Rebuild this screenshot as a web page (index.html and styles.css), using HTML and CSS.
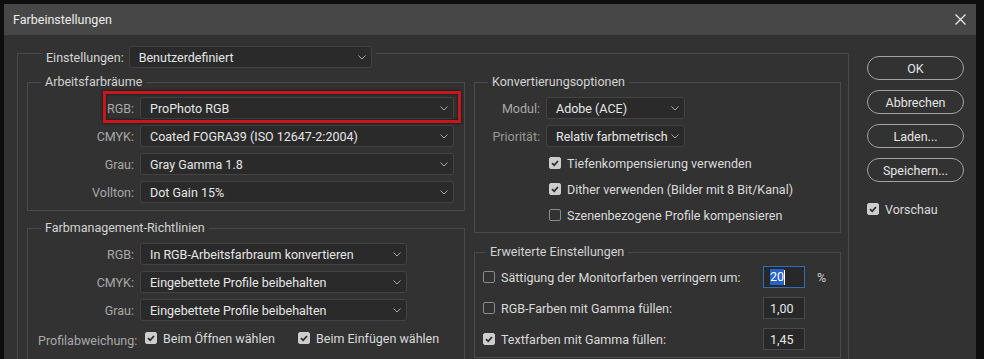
FILE: index.html
```html
<!DOCTYPE html>
<html lang="de">
<head>
  <meta charset="UTF-8" />
  <title>Farbeinstellungen</title>
  <link rel="stylesheet" href="styles.css">
</head>
<body>
  <div class="dialog">
    <div class="titlebar">
      <span>Farbeinstellungen</span>
      <svg class="close" width="11" height="11" viewBox="0 0 11 11"><path d="M0.5 0.5 L10.5 10.5 M10.5 0.5 L0.5 10.5" stroke="#e8e8e8" stroke-width="1.3" fill="none"/></svg>
    </div>

    <div class="dialog-body">
      <fieldset class="frame">
        <legend>
          <div class="frame-head">
            <span>Einstellungen:</span>
            <div class="select sel-preset"><span>Benutzerdefiniert</span><svg width="8" height="5" viewBox="0 0 8 5"><path d="M0.5 0.5 L4 4 L7.5 0.5" fill="none" stroke="#a8a8a8"/></svg></div>
          </div>
        </legend>

        <div class="columns">
          <div class="col col-left">
            <fieldset class="group">
              <legend>Arbeitsfarbräume</legend>
              <div class="field marked">
                <label>RGB:</label>
                <div class="select sel-space"><span>ProPhoto RGB</span><svg width="8" height="5" viewBox="0 0 8 5"><path d="M0.5 0.5 L4 4 L7.5 0.5" fill="none" stroke="#a8a8a8"/></svg></div>
              </div>
              <div class="field">
                <label>CMYK:</label>
                <div class="select sel-space"><span>Coated FOGRA39 (ISO 12647-2:2004)</span><svg width="8" height="5" viewBox="0 0 8 5"><path d="M0.5 0.5 L4 4 L7.5 0.5" fill="none" stroke="#a8a8a8"/></svg></div>
              </div>
              <div class="field">
                <label>Grau:</label>
                <div class="select sel-space"><span>Gray Gamma 1.8</span><svg width="8" height="5" viewBox="0 0 8 5"><path d="M0.5 0.5 L4 4 L7.5 0.5" fill="none" stroke="#a8a8a8"/></svg></div>
              </div>
              <div class="field">
                <label>Vollton:</label>
                <div class="select sel-space"><span>Dot Gain 15%</span><svg width="8" height="5" viewBox="0 0 8 5"><path d="M0.5 0.5 L4 4 L7.5 0.5" fill="none" stroke="#a8a8a8"/></svg></div>
              </div>
            </fieldset>

            <fieldset class="group group-policy">
              <legend>Farbmanagement-Richtlinien</legend>
              <div class="field">
                <label>RGB:</label>
                <div class="select sel-policy"><span>In RGB-Arbeitsfarbraum konvertieren</span><svg width="8" height="5" viewBox="0 0 8 5"><path d="M0.5 0.5 L4 4 L7.5 0.5" fill="none" stroke="#a8a8a8"/></svg></div>
              </div>
              <div class="field">
                <label>CMYK:</label>
                <div class="select sel-policy"><span>Eingebettete Profile beibehalten</span><svg width="8" height="5" viewBox="0 0 8 5"><path d="M0.5 0.5 L4 4 L7.5 0.5" fill="none" stroke="#a8a8a8"/></svg></div>
              </div>
              <div class="field">
                <label>Grau:</label>
                <div class="select sel-policy"><span>Eingebettete Profile beibehalten</span><svg width="8" height="5" viewBox="0 0 8 5"><path d="M0.5 0.5 L4 4 L7.5 0.5" fill="none" stroke="#a8a8a8"/></svg></div>
              </div>
              <div class="field">
                <label class="low">Profilabweichung:</label>
                <div class="check-pair">
                  <div class="check"><span class="box on"><svg width="10" height="10" viewBox="0 0 10 10"><path d="M2 5.2 L4.2 7.3 L8 3" fill="none" stroke="#2e2e2e" stroke-width="1.8"/></svg></span>Beim Öffnen wählen</div>
                  <div class="check"><span class="box on"><svg width="10" height="10" viewBox="0 0 10 10"><path d="M2 5.2 L4.2 7.3 L8 3" fill="none" stroke="#2e2e2e" stroke-width="1.8"/></svg></span>Beim Einfügen wählen</div>
                </div>
              </div>
              <div class="field">
                <label class="low">Fehlende Profile:</label>
                <div class="check-pair">
                  <div class="check"><span class="box on"><svg width="10" height="10" viewBox="0 0 10 10"><path d="M2 5.2 L4.2 7.3 L8 3" fill="none" stroke="#2e2e2e" stroke-width="1.8"/></svg></span>Beim Öffnen wählen</div>
                </div>
              </div>
            </fieldset>
          </div>

          <div class="col col-right">
            <fieldset class="group group-convert">
              <legend>Konvertierungsoptionen</legend>
              <div class="field">
                <label>Modul:</label>
                <div class="select sel-short"><span>Adobe (ACE)</span><svg width="8" height="5" viewBox="0 0 8 5"><path d="M0.5 0.5 L4 4 L7.5 0.5" fill="none" stroke="#a8a8a8"/></svg></div>
              </div>
              <div class="field">
                <label class="dim">Priorität:</label>
                <div class="select sel-short"><span>Relativ farbmetrisch</span><svg width="8" height="5" viewBox="0 0 8 5"><path d="M0.5 0.5 L4 4 L7.5 0.5" fill="none" stroke="#a8a8a8"/></svg></div>
              </div>
              <div class="check indent"><span class="box on"><svg width="10" height="10" viewBox="0 0 10 10"><path d="M2 5.2 L4.2 7.3 L8 3" fill="none" stroke="#2e2e2e" stroke-width="1.8"/></svg></span>Tiefenkompensierung verwenden</div>
              <div class="check indent"><span class="box on"><svg width="10" height="10" viewBox="0 0 10 10"><path d="M2 5.2 L4.2 7.3 L8 3" fill="none" stroke="#2e2e2e" stroke-width="1.8"/></svg></span>Dither verwenden (Bilder mit 8 Bit/Kanal)</div>
              <div class="check indent"><span class="box"></span>Szenenbezogene Profile kompensieren</div>
            </fieldset>

            <fieldset class="group group-advanced">
              <legend>Erweiterte Einstellungen</legend>
              <div class="adv-row">
                <div class="check"><span class="box"></span>Sättigung der Monitorfarben verringern um:</div>
                <div class="num focused"><span class="sel-text">20</span><span class="caret"></span></div>
                <span class="unit">%</span>
              </div>
              <div class="adv-row">
                <div class="check"><span class="box"></span>RGB-Farben mit Gamma füllen:</div>
                <div class="num">1,00</div>
                <span class="unit"></span>
              </div>
              <div class="adv-row">
                <div class="check"><span class="box on"><svg width="10" height="10" viewBox="0 0 10 10"><path d="M2 5.2 L4.2 7.3 L8 3" fill="none" stroke="#2e2e2e" stroke-width="1.8"/></svg></span>Textfarben mit Gamma füllen:</div>
                <div class="num">1,45</div>
                <span class="unit"></span>
              </div>
            </fieldset>
          </div>
        </div>
      </fieldset>

      <div class="actions">
        <button class="btn">OK</button>
        <button class="btn">Abbrechen</button>
        <button class="btn">Laden...</button>
        <button class="btn">Speichern...</button>
        <div class="check preview"><span class="box on"><svg width="10" height="10" viewBox="0 0 10 10"><path d="M2 5.2 L4.2 7.3 L8 3" fill="none" stroke="#2e2e2e" stroke-width="1.8"/></svg></span>Vorschau</div>
      </div>
    </div>
  </div>
</body>
</html>
```

FILE: styles.css
```css
* {
  box-sizing: border-box;
  margin: 0;
  padding: 0;
}

html, body {
  height: 100%;
}

body {
  background: #0e0e0e;
  font-family: Roboto, 'Liberation Sans', sans-serif;
  font-size: 12.5px;
  color: #d8d8d8;
  padding: 4px 8px 0 4px;
  overflow: hidden;
}

.dialog {
  background: #323232;
  height: 420px;
}

.titlebar {
  height: 31px;
  background: #474747;
  color: #ececec;
  display: flex;
  align-items: center;
  justify-content: space-between;
  padding: 0 10px 0 9px;
}

.dialog-body {
  display: flex;
  padding: 3px 12px 0 13px;
}

/* outer frame with the preset selector in its border */
.frame {
  width: 832px;
  height: 380px;
  min-width: 0;
  border: 1px solid #4a4a4a;
  padding: 6px 7px 0 9px;
}

.frame > legend {
  margin-left: 15px;
  padding: 8px 4px 0;
}

.frame-head {
  display: flex;
  align-items: center;
  gap: 5px;
  color: #d6d6d6;
}

.columns {
  display: flex;
  gap: 9px;
}

.col {
  display: flex;
  flex-direction: column;
}

.col-left {
  width: 438px;
}

.col-right {
  width: 367px;
}

.group {
  min-width: 0;
  border: 1px solid #4a4a4a;
  padding: 7px 10px 7px;
  display: flex;
  flex-direction: column;
  gap: 6px;
}

.group legend {
  margin-left: 3px;
  padding: 0 4px;
  line-height: 16px;
  color: #d2d2d2;
}

.group-policy {
  margin-top: 9px;
}

.group-advanced {
  margin-top: 11px;
  padding: 6px 0 7px 8px;
  gap: 9px;
}

.field {
  display: flex;
  align-items: center;
  gap: 6px;
  height: 22px;
}

.field label {
  flex: none;
  width: 96px;
  text-align: right;
  color: #a9a9a9;
}

.group-convert .field label {
  width: 55px;
}

.field label.dim {
  color: #989898;
}

.field label.low {
  padding-top: 5px;
}

/* red annotation box round the RGB row */
.field.marked {
  position: relative;
}

.field.marked::after {
  content: "";
  position: absolute;
  left: 65px;
  right: -7px;
  top: -6px;
  bottom: -4px;
  border: 3px solid #c8161c;
  box-shadow: 0 0 3px rgba(0, 0, 0, 0.7), inset 0 0 3px rgba(0, 0, 0, 0.7);
  pointer-events: none;
}

.select {
  height: 22px;
  display: flex;
  align-items: center;
  justify-content: space-between;
  padding: 0 5px 0 9px;
  background: #2a2a2a;
  border: 1px solid #434343;
  border-radius: 3px;
  color: #e6e6e6;
  white-space: nowrap;
}

.sel-preset {
  width: 243px;
}

.sel-space {
  width: 314px;
}

.sel-policy {
  width: 267px;
}

.sel-short {
  width: 139px;
}

.check {
  display: flex;
  align-items: center;
  gap: 6px;
  height: 20px;
  color: #dadada;
  white-space: nowrap;
}

.check.indent {
  margin-left: 64px;
}

.box {
  flex: none;
  width: 12px;
  height: 12px;
  border: 1px solid #8a8a8a;
  border-radius: 2px;
  display: flex;
  align-items: center;
  justify-content: center;
}

.box.on {
  background: #cdcdcd;
  border-color: #cdcdcd;
}

.check-pair {
  display: flex;
  gap: 23px;
  margin-left: 5px;
}

.adv-row {
  display: flex;
  align-items: center;
  height: 22px;
}

.adv-row .check {
  flex: 1;
}

.num {
  width: 42px;
  height: 22px;
  display: flex;
  align-items: center;
  padding-left: 6px;
  background: #282828;
  border: 1px solid #494949;
  color: #e6e6e6;
}

.num.focused {
  border-color: #2e6cbf;
}

.sel-text {
  background: #2563c7;
  color: #ffffff;
  line-height: 16px;
}

.caret {
  width: 1px;
  height: 15px;
  background: #ffffff;
}

.unit {
  width: 35px;
  padding-left: 12px;
  color: #cfcfcf;
}

.actions {
  width: 97px;
  margin-left: 18px;
  padding-top: 18px;
  display: flex;
  flex-direction: column;
  gap: 10px;
}

.btn {
  height: 24px;
  border: 1.5px solid #a3a3a3;
  border-radius: 12px;
  background: transparent;
  color: #e4e4e4;
  font-family: Roboto, 'Liberation Sans', sans-serif;
  font-size: 12.5px;
}

.check.preview {
  margin-top: 7px;
}
```
